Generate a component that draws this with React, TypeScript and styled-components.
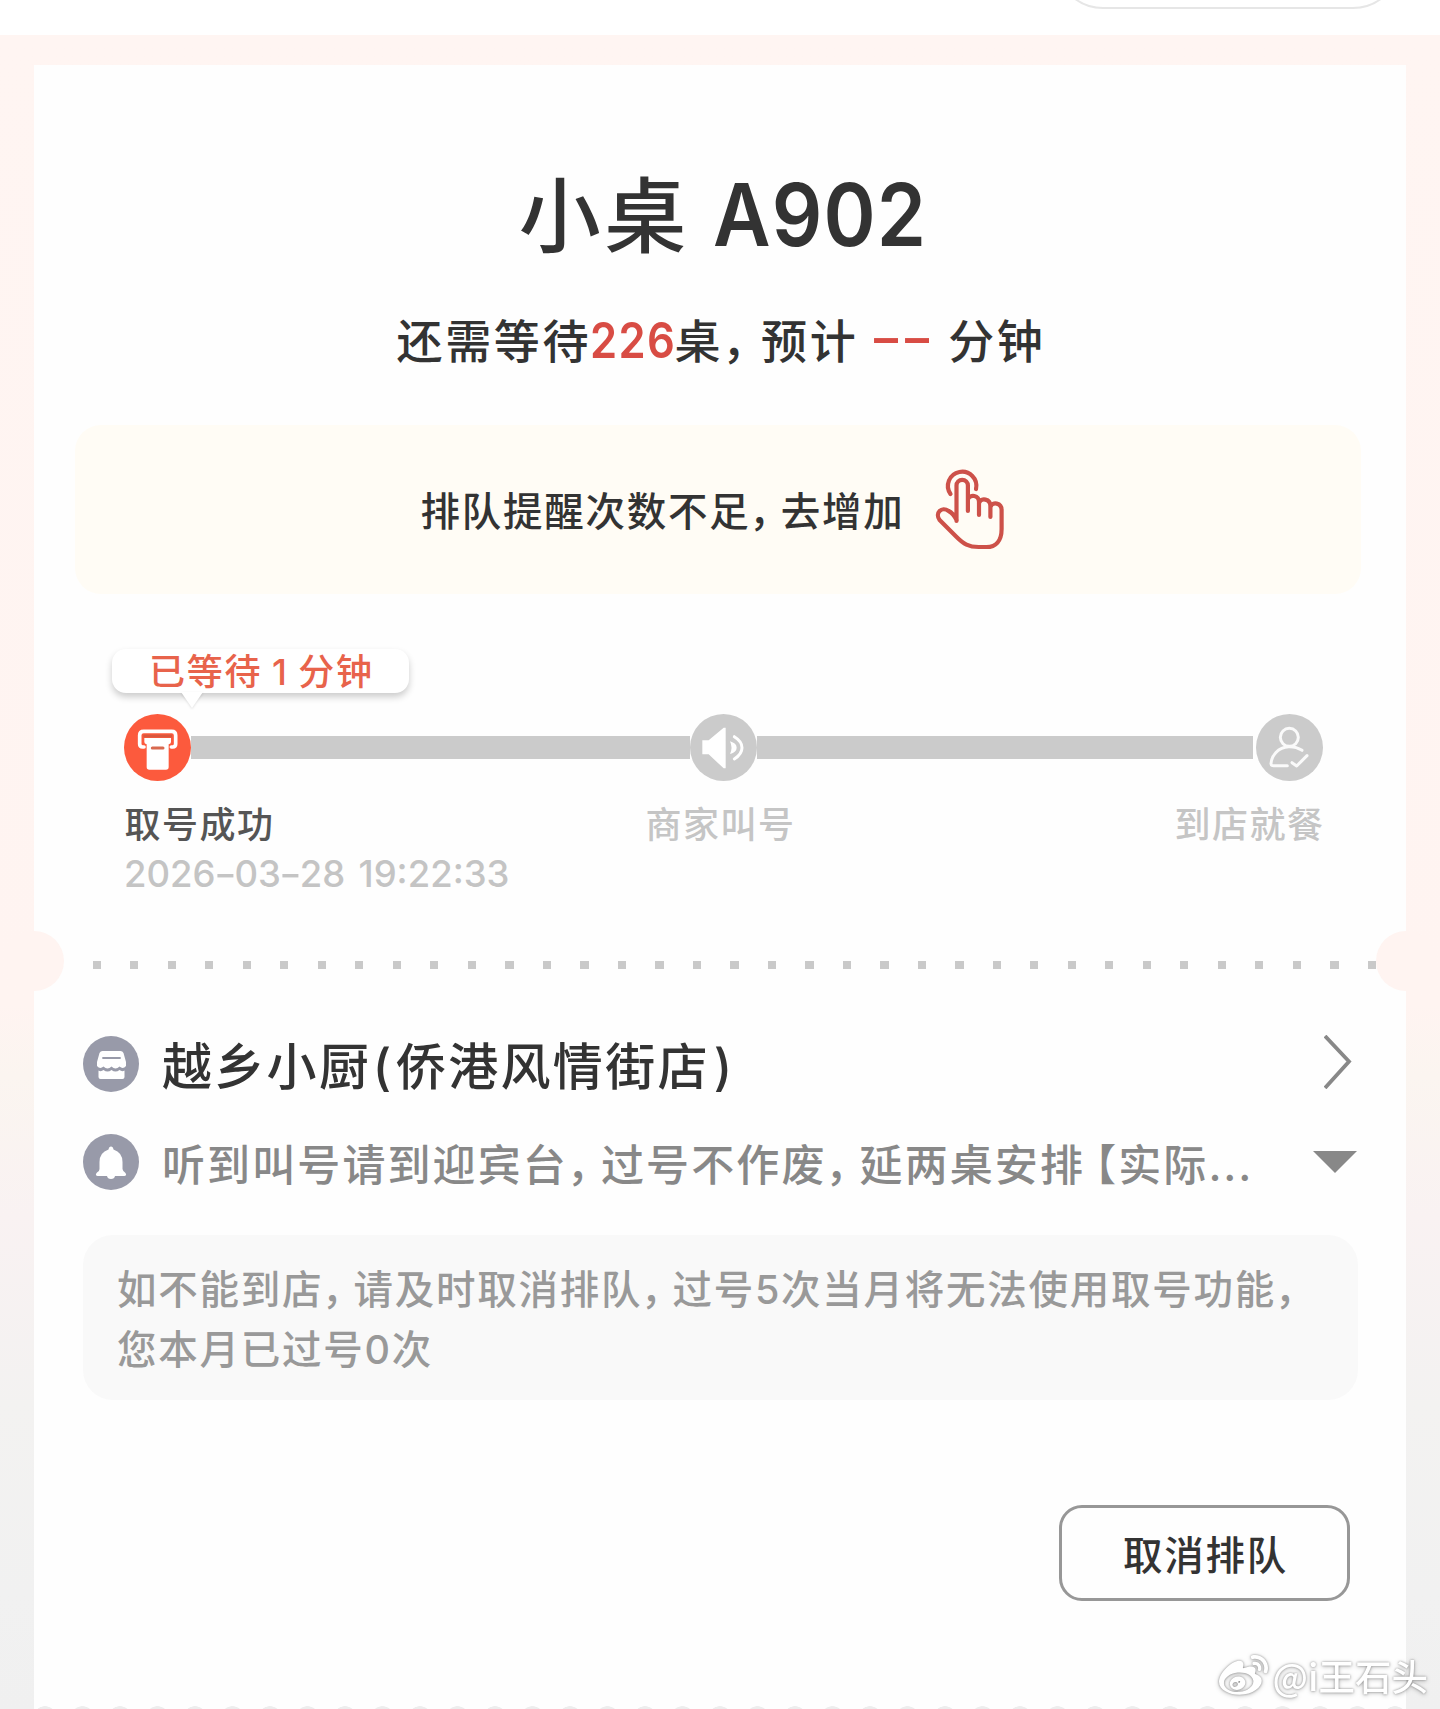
import React from "react";
import styled, { createGlobalStyle } from "styled-components";
import { FaWeibo } from "react-icons/fa";

const GlobalStyle = createGlobalStyle`
  * { box-sizing: border-box; }
  body { margin: 0; background: #fff; }
`;

const Screen = styled.div`
  position: relative;
  display: flex;
  flex-direction: column;
  width: 1440px;
  height: 1709px;
  overflow: hidden;
  font-family: Inter, "Noto Sans CJK SC", sans-serif;
  font-weight: 500;
  color: #333;
  white-space: nowrap;
`;

const TopBar = styled.header`
  flex: none;
  display: flex;
  justify-content: flex-end;
  align-items: flex-start;
  height: 35px;
  padding-right: 39px;
  background: #fff;
  overflow: hidden;
`;

const Capsule = styled.div`
  width: 346px;
  height: 96px;
  margin-top: -87px;
  border: 2px solid #e6e6e6;
  border-radius: 48px;
`;

const Page = styled.main`
  flex: 1;
  padding: 30px 34px 0;
  background: linear-gradient(
    #fff5f2 0,
    #fff4f1 970px,
    #fbf5f0 1040px,
    #f9f2f2 1180px,
    #f3f2f1 1370px,
    #f1f1f1 1560px,
    #f0f0f0 100%
  );
`;

const Card = styled.section`
  display: flex;
  flex-direction: column;
  height: 1644px;
  padding-top: 100px;
  background: #fefefe;
  & > * { flex-shrink: 0; }
`;

const Title = styled.h1`
  height: 100px;
  margin: 0;
  line-height: 103px;
  text-align: center;
  font-size: 82px;
  font-weight: 500;
  letter-spacing: 3.5px;
`;

const Code = styled.span`
  display: inline-block;
  margin: 0 -24px 0 23px;
  line-height: 1;
  font-size: 86px;
  font-weight: 600;
  letter-spacing: 1.2px;
  transform: scaleX(0.92);
  transform-origin: left center;
`;

const Waiting = styled.p`
  height: 60px;
  margin: 46px 0 0;
  padding-left: 2px;
  line-height: 60px;
  text-align: center;
  font-size: 46px;
  letter-spacing: 2.7px;
`;

const Count = styled.span`
  display: inline-block;
  margin: 0 -13.5px 0 -1px;
  line-height: 1;
  font-size: 49.5px;
  font-weight: 600;
  letter-spacing: 1.5px;
  color: #d84c44;
  transform: scaleX(0.88);
  transform-origin: left center;
`;

const Dashes = styled(Count)`
  margin: 0 39px 0 11px;
  font-size: 47px;
  letter-spacing: -2px;
  transform: translateY(-3px) scaleX(1.56);
`;

const Comma = styled.span<{ $after?: number }>`
  margin-left: -0.03em;
  margin-right: ${(p) => p.$after ?? -0.25}em;
  &::before { content: "，"; }
`;

const Notice = styled.div`
  display: flex;
  justify-content: center;
  align-items: center;
  height: 169px;
  margin: 54px 45px 0 41px;
  padding-right: 5px;
  gap: 26px;
  border-radius: 26px;
  background: #fffcf5;
`;

const NoticeText = styled.span`
  padding-bottom: 3px;
  font-size: 39.5px;
  letter-spacing: 1.75px;
`;

const Progress = styled.div`
  display: flex;
  flex-direction: column;
  margin-top: 55px;
  padding-left: 90px;
`;

const Bubble = styled.div`
  position: relative;
  width: 297px;
  height: 44px;
  margin-left: -12px;
  padding-left: 37px;
  border-radius: 14px;
  background: #fff;
  box-shadow: 0 4px 7px rgba(0, 0, 0, 0.2);
  line-height: 46px;
  font-size: 36px;
  letter-spacing: 1.7px;
  word-spacing: -1.5px;
  color: #e8634b;
  &::after {
    content: "";
    position: absolute;
    left: 69px;
    top: 43px;
    border: 11px solid transparent;
    border-top: 16px solid #fff;
    border-bottom: 0;
    filter: drop-shadow(0 1px 1px rgba(0, 0, 0, 0.12));
  }
`;

const Track = styled.div`
  display: flex;
  align-items: center;
  height: 67px;
  margin-top: 21px;
`;

const StepIcon = styled.svg`
  flex: none;
  width: 67px;
  height: 67px;
`;

const Bar = styled.div<{ $length: number; $gap?: number }>`
  width: ${(p) => p.$length}px;
  height: 23px;
  margin-right: ${(p) => p.$gap ?? 0}px;
  background: #cbcbcb;
`;

const Labels = styled.div`
  display: grid;
  grid-template-columns: 521px 529px auto;
  height: 44px;
  margin-top: 21px;
  padding-left: 0.5px;
  line-height: 46px;
`;

const Label = styled.span<{ $active?: boolean }>`
  font-size: 36px;
  letter-spacing: 1.5px;
  color: ${(p) => (p.$active ? "#555" : "#c5c5c5")};
`;

const DateLine = styled.time`
  margin-top: 7px;
  height: 41px;
  line-height: 42px;
  font-size: 36.5px;
  word-spacing: 3.5px;
  color: #c4c4c4;
`;

const Hyphen = styled.span`
  display: inline-block;
  margin: 0 1px;
  transform: scaleX(1.35);
`;

const Tear = styled.div`
  display: flex;
  align-items: center;
  height: 60px;
  margin: 37px -30px 0;
`;

const Notch = styled.i`
  flex: none;
  width: 60px;
  height: 60px;
  border-radius: 50%;
  background: #fff4f1;
`;

const Dots = styled.div`
  flex: 1;
  height: 8px;
  margin: 8px 0 0 29px;
  background: repeating-linear-gradient(90deg, #c9c9c9 0 8px, transparent 8px 37.5px);
`;

const InfoRow = styled.div<{ $top: number }>`
  display: flex;
  align-items: center;
  height: 56px;
  margin-top: ${(p) => p.$top}px;
  padding: 0 49px;
`;

const RoundIcon = styled.svg`
  flex: none;
  width: 56px;
  height: 56px;
  margin-right: 23px;
`;

const StoreName = styled.h2`
  flex: 1;
  margin: 0;
  padding-top: 5px;
  font-size: 50px;
  font-weight: 500;
  line-height: 60px;
  letter-spacing: 2.3px;
`;

const Paren = styled.span<{ $before?: number }>`
  margin: 0 2.5px 0 ${(p) => p.$before ?? 1.5}px;
`;

const Message = styled.span`
  flex: 1;
  padding-top: 6px;
  font-size: 43px;
  line-height: 56px;
  letter-spacing: 2.1px;
  color: #888;
`;

const Bracket = styled.span`
  margin-left: 9.6px;
  font-feature-settings: "halt";
`;

const Ellipsis = styled.span`
  letter-spacing: 1.8px;
`;

const Chevron = styled.svg`
  width: 28px;
  height: 54px;
  margin: -4px 5px 0 0;
`;

const Caret = styled.i`
  margin: -1px 0 0;
  border: 22px solid transparent;
  border-top-color: #888;
  border-bottom: 0;
`;

const Warning = styled.p`
  height: 165px;
  margin: 45px 48px 0 49px;
  padding: 25px 34px 0;
  border-radius: 30px;
  background: #f9f9f9;
  font-size: 39.5px;
  line-height: 60px;
  letter-spacing: 1.75px;
  color: #999;
`;

const CancelButton = styled.button`
  align-self: flex-end;
  width: 291px;
  height: 96px;
  margin: 105px 56px 0 0;
  padding: 0 0 1px 2px;
  border: 3px solid #979797;
  border-radius: 23px;
  background: transparent;
  font: 500 39.5px Inter, "Noto Sans CJK SC", sans-serif;
  letter-spacing: 1.8px;
  color: #333;
`;

const Perforation = styled.div`
  height: 24px;
  margin-top: 105px;
  background: radial-gradient(circle at 11px 12px, #ededed 11.5px, transparent 12px) 0 0 / 37.5px 24px repeat-x;
`;

const Watermark = styled.div`
  position: absolute;
  right: 12px;
  bottom: 8px;
  display: flex;
  align-items: center;
  gap: 5px;
  font: 500 36.5px/50px "Noto Sans CJK SC", sans-serif;
  color: #fff;
  filter: drop-shadow(0 0 1px rgba(0, 0, 0, 0.35)) drop-shadow(0 1px 2px rgba(0, 0, 0, 0.25));
`;

const HandIcon = () => (
  <svg width="80" height="90" viewBox="930 465 80 90" fill="none" stroke="#cd5149" strokeWidth="4.200" strokeLinecap="round" strokeLinejoin="round">
    <path d="M950.5 494A14.2 14.2 0 1 1 976 489" />
    <path d="M956.5 521V485.500a5.700 5.700 0 0 1 11.400 0V511M968 499c2-5 11-4 11 3v13M979 503c2-6 11.400-4 11.400 3v11M990.400 507c2-6 11.200-4 11.200 3v19c0 12-6 18-15 18h-8c-10 0-15-3-22-10l-17-17c-5-7 2-14 9-9 4 2 7 7 8 9" />
  </svg>
);

const TicketStep = () => (
  <StepIcon viewBox="0 0 201 201">
    <circle cx="100.500" cy="100.500" r="100.500" fill="#fc5a3d" />
    <path d="M60 99H56Q47 99 47 90V64Q47 52 59 52H143Q155 52 155 64V90Q155 99 146 99H142" fill="none" stroke="#fff" strokeWidth="11" strokeLinecap="round" />
    <path d="M61 72H141V84Q141 89 134 91V159Q134 167 126 167H76Q68 167 68 159V91Q61 89 61 84Z" fill="#fff" />
    <path d="M58 66H144" stroke="#d8583f" strokeWidth="8" />
    <path d="M85 102H117" stroke="#d8694f" strokeWidth="9" strokeLinecap="round" />
  </StepIcon>
);

const SpeakerStep = () => (
  <StepIcon viewBox="0 0 201 201">
    <circle cx="100.500" cy="100.500" r="100.500" fill="#cbcbcb" />
    <path d="M37 79H56L101 41H107V163H101L56 121H37Z" fill="#fff" />
    <path d="M133 68Q156 82 156 101T133 135" fill="none" stroke="#fff" strokeWidth="9" strokeLinecap="round" />
    <path d="M120 82Q140 88 140 101T120 120Q129 101 120 82Z" fill="#fff" />
  </StepIcon>
);

const DinerStep = () => (
  <StepIcon viewBox="0 0 201 201">
    <circle cx="100.500" cy="100.500" r="100.500" fill="#cbcbcb" />
    <g fill="none" stroke="#fafafa" strokeWidth="9" strokeLinecap="round" strokeLinejoin="round">
      <circle cx="100" cy="70" r="27" />
      <path d="M138 109Q120 97 98 98C66 99 46 126 45 149Q45 155 52 155H94" />
      <path d="M108 146L122 156L153 125" />
    </g>
  </StepIcon>
);

const ShopIcon = () => (
  <RoundIcon viewBox="0 0 56 56">
    <circle cx="28" cy="28" r="28" fill="#989aa9" />
    <path d="M19.500 15H37.500Q39.500 15 40.500 17L43 26V30Q40 33.500 36.500 30.500Q32.500 34.500 28.500 30.500Q24.500 34.500 20.500 30.500Q17 33.500 14 30V26L16.500 17Q17.500 15 19.500 15Z" fill="#fff" />
    <path d="M15.500 34.500Q18 36 20.500 34Q24.500 37 28.500 34Q32.500 37 36.500 34Q39 36 41.500 34.500V41Q41.500 43 39.500 43H17.500Q15.500 43 15.500 41Z" fill="#fff" />
    <path d="M20 22H37" stroke="#989aa9" strokeWidth="1.800" strokeLinecap="round" />
  </RoundIcon>
);

const BellIcon = () => (
  <RoundIcon viewBox="0 0 56 56">
    <circle cx="28" cy="28" r="28" fill="#989aa9" />
    <path d="M28 12.500Q30 12.500 30.500 15.500Q39.500 18.500 39.500 28V35Q40 37.500 42 38.500Q44.500 41.500 41.500 42H32Q31.500 45 28 45T24 42H14.500Q11.500 41.500 14 38.500Q16.500 37.500 16.500 35V28Q16.500 18.500 25.500 15.500Q26 12.500 28 12.500Z" fill="#fff" />
  </RoundIcon>
);

export default function App() {
  return (
    <Screen>
      <GlobalStyle />
      <TopBar>
        <Capsule />
      </TopBar>
      <Page>
        <Card>
          <Title>
            小桌<Code>A902</Code>
          </Title>
          <Waiting>
            还需等待<Count>226</Count>桌<Comma $after={-0.21} />预计<Dashes>--</Dashes>分钟
          </Waiting>
          <Notice>
            <NoticeText>
              排队提醒次数不足<Comma />去增加
            </NoticeText>
            <HandIcon />
          </Notice>
          <Progress>
            <Bubble>已等待 1 分钟</Bubble>
            <Track>
              <TicketStep />
              <Bar $length={499} />
              <SpeakerStep />
              <Bar $length={496} $gap={3} />
              <DinerStep />
            </Track>
            <Labels>
              <Label $active>取号成功</Label>
              <Label>商家叫号</Label>
              <Label>到店就餐</Label>
            </Labels>
            <DateLine>
              2026<Hyphen>-</Hyphen>03<Hyphen>-</Hyphen>28 19:22:33
            </DateLine>
          </Progress>
          <Tear>
            <Notch />
            <Dots />
            <Notch />
          </Tear>
          <InfoRow $top={45}>
            <ShopIcon />
            <StoreName>
              越乡小厨<Paren>(</Paren>侨港风情街店<Paren $before={4}>)</Paren>
            </StoreName>
            <Chevron viewBox="0 0 28 54" fill="none" stroke="#888" strokeWidth="3.800">
              <path d="M1 1L25 26.500L1 53" />
            </Chevron>
          </InfoRow>
          <InfoRow $top={42}>
            <BellIcon />
            <Message>
              听到叫号请到迎宾台<Comma />过号不作废<Comma />延两桌安排<Bracket>【</Bracket>实际<Ellipsis>...</Ellipsis>
            </Message>
            <Caret />
          </InfoRow>
          <Warning>
            如不能到店<Comma />请及时取消排队<Comma />过号5次当月将无法使用取号功能<Comma />
            <br />
            您本月已过号0次
          </Warning>
          <CancelButton>取消排队</CancelButton>
          <Perforation />
        </Card>
      </Page>
      <Watermark>
        <FaWeibo size={49} />
        <span>@i王石头</span>
      </Watermark>
    </Screen>
  );
}
